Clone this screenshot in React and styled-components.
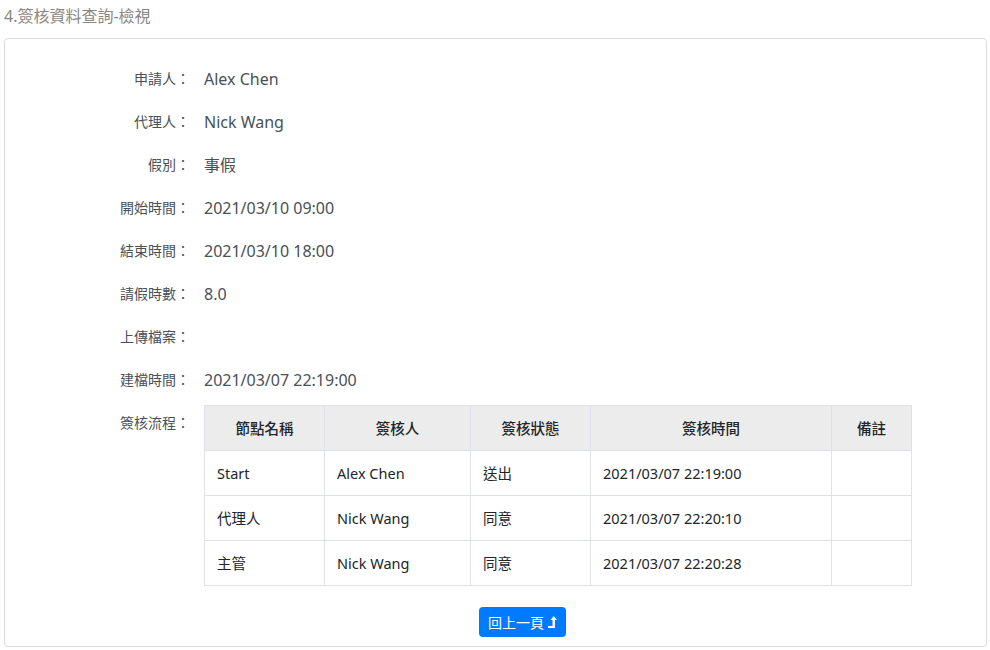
import React from 'react';
import styled, { createGlobalStyle } from 'styled-components';

const GlobalStyle = createGlobalStyle`
    body {
        margin: 0;
        background: #fff;
        font-family: "Noto Sans", "Noto Sans CJK TC", sans-serif;
        color: #495057;
    }
`;

const Page = styled.div`
    padding: 4px 3px 0 4px;
`;

const Title = styled.div`
    font-size: 16px;
    line-height: 24px;
    color: #8a8580;
    margin-bottom: 10px;
`;

const Card = styled.div`
    border: 1px solid #dcdcdc;
    border-radius: 4px;
    padding: 22px 0 9px;
    display: flex;
    flex-direction: column;
`;

const Fields = styled.div`
    display: flex;
    flex-direction: column;
    gap: 7px;
`;

const Row = styled.div`
    display: grid;
    grid-template-columns: 185px 1fr;
    column-gap: 14px;
`;

const Label = styled.div`
    font-size: 14px;
    line-height: 36px;
    text-align: right;
    color: #495057;
`;

const Value = styled.div`
    font-size: 16px;
    line-height: 36px;
    min-height: 36px;
    color: #495057;
`;

const Table = styled.table`
    border-collapse: collapse;
    table-layout: fixed;
    width: 707px;
    font-size: 14.5px;
    color: #212529;
    th, td {
        border: 1px solid #dee2e6;
        height: 44px;
        padding: 0 12px;
        line-height: 20px;
    }
    th {
        background: #ececec;
        font-weight: 500;
        text-align: center;
    }
    td {
        text-align: left;
        font-weight: 400;
    }
`;

const Actions = styled.div`
    display: flex;
    justify-content: center;
    margin-top: 21px;
    padding-left: 54px;
`;

const Button = styled.button`
    display: inline-flex;
    align-items: center;
    gap: 4px;
    height: 30px;
    padding: 0 9px;
    border: none;
    border-radius: 4px;
    background: #007bff;
    color: #fff;
    font-family: inherit;
    font-size: 14px;
    cursor: pointer;
`;

const fields = [
    ['申請人：', 'Alex Chen'],
    ['代理人：', 'Nick Wang'],
    ['假別：', '事假'],
    ['開始時間：', '2021/03/10 09:00'],
    ['結束時間：', '2021/03/10 18:00'],
    ['請假時數：', '8.0'],
    ['上傳檔案：', ''],
    ['建檔時間：', '2021/03/07 22:19:00'],
];

const columns = [
    ['節點名稱', 120],
    ['簽核人', 146],
    ['簽核狀態', 120],
    ['簽核時間', 241],
    ['備註', 80],
];

const steps = [
    ['Start', 'Alex Chen', '送出', '2021/03/07 22:19:00', ''],
    ['代理人', 'Nick Wang', '同意', '2021/03/07 22:20:10', ''],
    ['主管', 'Nick Wang', '同意', '2021/03/07 22:20:28', ''],
];

// level-up arrow like the font awesome one
const LevelUp = () => (
    <svg width="9" height="12" viewBox="0 0 9 12">
        <path d="M0 10h4.5V4H2.5L5.75 0 9 4H7v8H0z" fill="#fff" />
    </svg>
);

export default function App() {
    return (
        <Page>
            <GlobalStyle />
            <Title>4.簽核資料查詢-檢視</Title>
            <Card>
                <Fields>
                    {fields.map(([label, value]) => (
                        <Row key={label}>
                            <Label>{label}</Label>
                            <Value>{value}</Value>
                        </Row>
                    ))}
                    <Row>
                        <Label>簽核流程：</Label>
                        <div>
                            <Table>
                                <colgroup>
                                    {columns.map(([name, w]) => <col key={name} style={{ width: w }} />)}
                                </colgroup>
                                <thead>
                                    <tr>
                                        {columns.map(([name]) => <th key={name}>{name}</th>)}
                                    </tr>
                                </thead>
                                <tbody>
                                    {steps.map((s, i) => (
                                        <tr key={i}>
                                            {s.map((c, j) => <td key={j}>{c}</td>)}
                                        </tr>
                                    ))}
                                </tbody>
                            </Table>
                        </div>
                    </Row>
                </Fields>
                <Actions>
                    <Button>回上一頁<LevelUp /></Button>
                </Actions>
            </Card>
        </Page>
    );
}
